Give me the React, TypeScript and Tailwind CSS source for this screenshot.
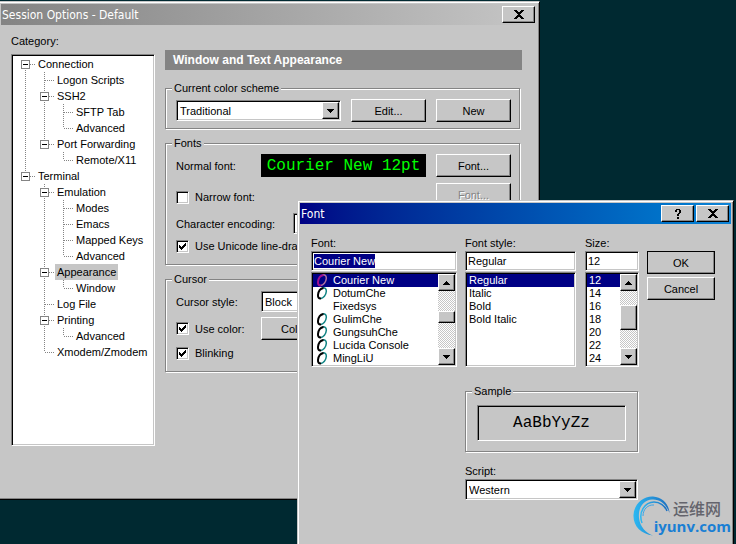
import type { ReactNode } from "react";
import clsx from "clsx";

type TreeRow = {
    label: string;
    // one letter per column: "l" line, "t" tee, "e" elbow, "b"/"m"/"x" box with a line below / through / above
    guides: string;
    selected?: boolean;
};

const tree: TreeRow[] = [
    { label: "Connection", guides: "b" },
    { label: "Logon Scripts", guides: "lt" },
    { label: "SSH2", guides: "lm" },
    { label: "SFTP Tab", guides: "llt" },
    { label: "Advanced", guides: "lle" },
    { label: "Port Forwarding", guides: "lx" },
    { label: "Remote/X11", guides: "l e" },
    { label: "Terminal", guides: "x" },
    { label: "Emulation", guides: " m" },
    { label: "Modes", guides: " lt" },
    { label: "Emacs", guides: " lt" },
    { label: "Mapped Keys", guides: " lt" },
    { label: "Advanced", guides: " le" },
    { label: "Appearance", guides: " m", selected: true },
    { label: "Window", guides: " le" },
    { label: "Log File", guides: " t" },
    { label: "Printing", guides: " m" },
    { label: "Advanced", guides: " le" },
    { label: "Xmodem/Zmodem", guides: " e" },
];

const fonts = [
    { name: "Courier New", icon: true },
    { name: "DotumChe", icon: true },
    { name: "Fixedsys", icon: false },
    { name: "GulimChe", icon: true },
    { name: "GungsuhChe", icon: true },
    { name: "Lucida Console", icon: true },
    { name: "MingLiU", icon: true },
];

const styles = ["Regular", "Italic", "Bold", "Bold Italic"];
const sizes = ["12", "14", "16", "18", "20", "22", "24"];

const raised =
    "bg-[#c6c6c6] border border-t-white border-l-white border-b-black border-r-black shadow-[inset_-1px_-1px_0_#848484]";
const sunken =
    "border border-t-[#848484] border-l-[#848484] border-b-white border-r-white shadow-[inset_1px_1px_0_#000,inset_-1px_-1px_0_#c6c6c6]";
const titleFont = "font-['DejaVu_Sans_Condensed','DejaVu_Sans',sans-serif] text-xs";

function Guide({ kind }: { kind: string }) {
    const box = "bxm".includes(kind);
    const up = "ltemx".includes(kind);
    const down = "ltbm".includes(kind);
    return (
        <svg width="19" height="16" className="shrink-0" shapeRendering="crispEdges" aria-hidden="true">
            <g stroke="#848484" strokeDasharray="1 1" fill="none">
                {up && <path d="M4.5 0V8" />}
                {down && <path d="M4.5 8V16" />}
                {kind !== "l" && kind !== " " && <path d="M5 8.5H14" />}
            </g>
            {box && (
                <>
                    <rect x="0.5" y="4.5" width="8" height="8" fill="#fff" stroke="#848484" />
                    <path d="M2 8.5H7" stroke="#000" />
                </>
            )}
        </svg>
    );
}

function Arrow({ up }: { up?: boolean }) {
    return (
        <svg width="7" height="4" viewBox="0 0 7 4" shapeRendering="crispEdges" aria-hidden="true">
            <path d={up ? "M3 0h1v1h1v1h1v1h1v1H0V3h1V2h1V1h1z" : "M0 0h7v1H6v1H5v1H4v1H3V3H2V2H1V1H0z"} />
        </svg>
    );
}

function CloseMark() {
    return (
        <svg width="10" height="9" viewBox="0 0 10 9" shapeRendering="crispEdges" aria-hidden="true">
            <path d="M0 0h3v1h1v1h2V1h1V0h3v1H9v1H8v1H7v1H6v1h1v1h1v1h1v1h1v1H7V8H6V7H4v1H3v1H0V8h1V7h1V6h1V5h1V4H3V3H2V2H1V1H0z" />
        </svg>
    );
}

function HelpMark() {
    return (
        <svg width="8" height="10" viewBox="0 0 8 10" shapeRendering="crispEdges" aria-hidden="true">
            <path d="M2 0h4v1h1v3H6v1H5v2H3V5h1V4h1V1H3v2H1V1h1zM3 8h2v2H3z" />
        </svg>
    );
}

function Button({ children, className, disabled }: { children: ReactNode; className?: string; disabled?: boolean }) {
    return (
        <button
            type="button"
            disabled={disabled}
            className={clsx(
                raised,
                "flex h-[23px] shrink-0 items-center justify-center",
                disabled && "text-[#848484] [text-shadow:1px_1px_0_#fff]",
                className
            )}
        >
            {children}
        </button>
    );
}

function TitleButton({ label, children }: { label: string; children: ReactNode }) {
    return (
        <button type="button" aria-label={label} className={clsx(raised, "flex h-[17px] w-[33px] items-center justify-center")}>
            {children}
        </button>
    );
}

function Group({ title, children, className }: { title: string; children: ReactNode; className?: string }) {
    return (
        <fieldset
            className={clsx(
                "min-w-0 border border-[#848484] shadow-[1px_1px_0_#fff,inset_1px_1px_0_#fff]",
                className
            )}
        >
            <legend className="ml-1.5 h-4 bg-[#c6c6c6] px-0.5">{title}</legend>
            {children}
        </fieldset>
    );
}

function Combo({ label, value, className }: { label: string; value: string; className?: string }) {
    return (
        <div className={clsx(sunken, "flex bg-white p-px", className)}>
            <select aria-label={label} className="h-[17px] w-full appearance-none px-0.5 leading-4 outline-none">
                <option>{value}</option>
            </select>
            <span className={clsx(raised, "pointer-events-none flex w-[17px] shrink-0 items-center justify-center")}>
                <Arrow />
            </span>
        </div>
    );
}

function Check({ label, checked }: { label: string; checked?: boolean }) {
    return (
        <label className="flex h-4 items-center gap-1.5 whitespace-nowrap">
            <span className="relative flex size-[13px] shrink-0">
                <input
                    type="checkbox"
                    defaultChecked={checked}
                    className={clsx(sunken, "peer size-[13px] appearance-none bg-white")}
                />
                <svg
                    viewBox="0 0 13 13"
                    className="pointer-events-none absolute inset-0 hidden peer-checked:block"
                    shapeRendering="crispEdges"
                    aria-hidden="true"
                >
                    <path d="M3 5h1v1h1v1h1V6h1V5h1V4h1V3h1v3H9v1H8v1H7v1H6v1H5V9H4V8H3z" />
                </svg>
            </span>
            {label}
        </label>
    );
}

function ScrollBar({ before, thumb }: { before: string; thumb: string }) {
    return (
        <div className="flex w-[17px] shrink-0 flex-col bg-[conic-gradient(#fff_25%,#c6c6c6_0_50%,#fff_0_75%,#c6c6c6_0)] bg-[length:2px_2px]">
            <button type="button" aria-label="Scroll up" className={clsx(raised, "flex h-[17px] items-center justify-center")}>
                <Arrow up />
            </button>
            <div className={before} />
            <div className={clsx(raised, thumb)} />
            <button
                type="button"
                aria-label="Scroll down"
                className={clsx(raised, "mt-auto flex h-[17px] items-center justify-center")}
            >
                <Arrow />
            </button>
        </div>
    );
}

function OpenTypeIcon({ selected }: { selected?: boolean }) {
    return (
        <svg width="12" height="13" viewBox="0 0 12 13" fill="none" aria-hidden="true">
            <path
                d="M6.500 1C8.500 0.500 10.500 1.500 10.300 4.500C10 8 7.500 11.500 4.500 11.500"
                stroke={selected ? "#b070a0" : "#108484"}
                strokeWidth="1.500"
            />
            <path
                d="M7.500 1C4.500 1.500 2.300 4.500 2 8C1.800 10.500 3 11.800 5 11.300"
                stroke={selected ? "#a01090" : "#000"}
                strokeWidth="2"
            />
        </svg>
    );
}

function Watermark() {
    return (
        <div className="absolute right-[5px] bottom-2 h-10 w-[98px]">
            <svg viewBox="0 0 98 40" className="absolute inset-0" fill="none" aria-hidden="true">
                <defs>
                    <linearGradient id="ring" x1="0" y1="0" x2="1" y2="0">
                        <stop offset="0" stopColor="#2cb8f2" />
                        <stop offset="1" stopColor="#1c6fc0" />
                    </linearGradient>
                </defs>
                <path
                    d="M20 39.500C8 38 0 30 0.500 19C1 8 10 0 20 0.500C29 1 36 8 36.500 17C33 8 27 3 19 3.500C10 4 5 12 6 22C7 31 13 37 20 39.500Z"
                    fill="url(#ring)"
                />
                <path d="M9 27C5 16 12 6 21 6C27 6 32 10 34 15" stroke="url(#ring)" strokeWidth="1.500" />
                <path d="M10 20C10 13 15 8.500 21 9" stroke="#3aa5ea" />
            </svg>
            <span className="absolute top-0.5 right-2.5 font-['Noto_Sans_CJK_SC',sans-serif] text-base leading-5 font-medium text-[#64646c]">
                运维网
            </span>
            <span className="absolute right-0 bottom-0.5 font-['Open_Sans',sans-serif] text-[15px] leading-4 font-bold text-[#1a7fd4]">
                iyunv.com
            </span>
        </div>
    );
}

function SessionOptions() {
    return (
        <section className="absolute top-px -left-0.5 flex h-[499px] w-[542px] flex-col border border-t-[#c6c6c6] border-l-[#c6c6c6] border-r-black border-b-black bg-[#c6c6c6] p-0.5 pr-px shadow-[inset_1px_1px_0_#fff,inset_-1px_-1px_0_#848484]">
            <header className="flex h-[21px] shrink-0 items-center justify-between bg-linear-to-r from-[#848484] to-[#c6c6c6] pr-[3px] pl-px">
                <h1 className={clsx(titleFont, "text-white")}>Session Options - Default</h1>
                <TitleButton label="Close">
                    <CloseMark />
                </TitleButton>
            </header>
            <div className="flex gap-2.5 pt-2 pr-4 pl-2.5">
                <div className="w-36 shrink-0">
                    <h2>Category:</h2>
                    <ul className={clsx(sunken, "mt-[5px] h-[392px] bg-white pt-px pl-[9px]")}>
                        {tree.map((row, i) => (
                            <li key={i} className="flex h-4 items-center whitespace-nowrap">
                                {row.guides.split("").map((kind, j) => (
                                    <Guide key={j} kind={kind} />
                                ))}
                                <span className={clsx("-ml-1 px-0.5", row.selected && "bg-[#c6c6c6]")}>{row.label}</span>
                            </li>
                        ))}
                    </ul>
                </div>
                <div className="min-w-0 grow pt-[17px]">
                    <h2 className="h-5 bg-[#848484] pl-2 text-xs leading-5 font-bold text-white">
                        Window and Text Appearance
                    </h2>
                    <Group title="Current color scheme" className="mt-2.5 mr-0.5 h-[49px]">
                        <div className="flex items-center gap-2.5 pt-[3px] pr-2 pl-2.5">
                            <Combo label="Current color scheme" value="Traditional" className="w-[165px]" />
                            <Button className="grow basis-0">Edit...</Button>
                            <Button className="grow basis-0">New</Button>
                        </div>
                    </Group>
                    <Group title="Fonts" className="mt-1.5 mr-0.5 h-[130px]">
                        <div className="flex gap-2.5 pt-[3px] pr-2 pl-2.5">
                            <div className="min-w-0 grow">
                                <div className="flex items-center justify-between">
                                    <span>Normal font:</span>
                                    <span className="h-[23px] w-[165px] bg-black text-center font-['Liberation_Mono',monospace] text-base leading-6 text-[#00ff00]">
                                        Courier New 12pt
                                    </span>
                                </div>
                                <div className="mt-3">
                                    <Check label="Narrow font:" />
                                </div>
                                <div className="mt-2 flex items-center">
                                    <span className="w-[117px] shrink-0">Character encoding:</span>
                                    <Combo label="Character encoding" value="Default" className="grow" />
                                </div>
                                <div className="mt-1">
                                    <Check label="Use Unicode line-drawing characters" checked />
                                </div>
                            </div>
                            <div className="flex w-[75px] shrink-0 flex-col gap-1.5">
                                <Button>Font...</Button>
                                <Button disabled>Font...</Button>
                            </div>
                        </div>
                    </Group>
                    <Group title="Cursor" className="mt-1.5 mr-0.5 h-[101px]">
                        <div className="grid grid-cols-[85px_1fr] items-center gap-y-[5px] px-2.5 pt-1">
                            <span>Cursor style:</span>
                            <Combo label="Cursor style" value="Block" className="w-28" />
                            <Check label="Use color:" checked />
                            <Button className="w-[75px]">Color...</Button>
                            <Check label="Blinking" checked />
                        </div>
                    </Group>
                </div>
            </div>
        </section>
    );
}

function FontDialog() {
    return (
        <section
            role="dialog"
            aria-label="Font"
            className="absolute top-[200px] left-[297px] flex h-[400px] w-[437px] flex-col border border-t-[#c6c6c6] border-l-[#c6c6c6] border-r-black border-b-black bg-[#c6c6c6] p-0.5 shadow-[inset_1px_1px_0_#fff,inset_-1px_-1px_0_#848484]"
        >
            <header className="flex h-[21px] shrink-0 items-center justify-between bg-linear-to-r from-[#000084] to-[#1084d6] pr-0.5 pl-px">
                <h2 className={clsx(titleFont, "text-white")}>Font</h2>
                <div className="flex gap-0.5">
                    <TitleButton label="Help">
                        <HelpMark />
                    </TitleButton>
                    <TitleButton label="Close">
                        <CloseMark />
                    </TitleButton>
                </div>
            </header>
            <div className="flex gap-2 pt-[11px] pl-[11px]">
                <div className="w-[146px]">
                    <label htmlFor="font" className="block h-4">
                        Font:
                    </label>
                    <div className={clsx(sunken, "flex h-5 items-center bg-white px-0.5")}>
                        <input
                            id="font"
                            defaultValue="Courier New"
                            className="field-sizing-content h-3.5 bg-[#000084] text-white outline-none"
                        />
                    </div>
                    <div className={clsx(sunken, "mt-px flex h-[95px] bg-white p-px")}>
                        <ul className="min-w-0 grow">
                            {fonts.map((font, i) => (
                                <li
                                    key={font.name}
                                    className={clsx(
                                        "flex h-[13px] items-center gap-1 pl-0.5 leading-[13px] whitespace-nowrap",
                                        i === 0 && "bg-[#000084] text-white"
                                    )}
                                >
                                    <span className="flex w-3.5 justify-center">
                                        {font.icon && <OpenTypeIcon selected={i === 0} />}
                                    </span>
                                    {font.name}
                                </li>
                            ))}
                        </ul>
                        <ScrollBar before="h-5" thumb="h-3" />
                    </div>
                </div>
                <div className="w-[111px]">
                    <label htmlFor="style" className="block h-4">
                        Font style:
                    </label>
                    <input
                        id="style"
                        defaultValue="Regular"
                        className={clsx(sunken, "block h-5 w-full bg-white px-0.5 outline-none")}
                    />
                    <ul className={clsx(sunken, "mt-px h-[95px] bg-white p-px")}>
                        {styles.map((style, i) => (
                            <li key={style} className={clsx("h-[13px] pl-0.5 leading-[13px]", i === 0 && "bg-[#000084] text-white")}>
                                {style}
                            </li>
                        ))}
                    </ul>
                    <Group title="Sample" className="mt-4 h-[69px] w-[173px]">
                        <div
                            className={clsx(
                                sunken,
                                "mx-[11px] mt-1.5 flex h-9 items-center justify-center font-['Liberation_Mono',monospace] text-base"
                            )}
                        >
                            AaBbYyZz
                        </div>
                    </Group>
                    <div className="mt-[11px]">Script:</div>
                    <Combo label="Script" value="Western" className="w-[173px]" />
                </div>
                <div className="ml-px w-[54px]">
                    <label htmlFor="size" className="block h-4">
                        Size:
                    </label>
                    <input
                        id="size"
                        defaultValue="12"
                        className={clsx(sunken, "block h-5 w-full bg-white px-0.5 outline-none")}
                    />
                    <div className={clsx(sunken, "mt-px flex h-[95px] bg-white p-px")}>
                        <ul className="min-w-0 grow">
                            {sizes.map((size, i) => (
                                <li key={size} className={clsx("h-[13px] pl-0.5 leading-[13px]", i === 0 && "bg-[#000084] text-white")}>
                                    {size}
                                </li>
                            ))}
                        </ul>
                        <ScrollBar before="h-3.5" thumb="h-[25px]" />
                    </div>
                </div>
                <div className="flex w-[68px] flex-col gap-[3px] pt-4">
                    <Button className="outline outline-black -outline-offset-1">OK</Button>
                    <Button>Cancel</Button>
                </div>
            </div>
        </section>
    );
}

export default function App() {
    return (
        <main className="relative min-h-screen overflow-hidden bg-[#002931] font-['Liberation_Sans',sans-serif] text-[11px] leading-4 text-black">
            <SessionOptions />
            <FontDialog />
            <Watermark />
        </main>
    );
}
